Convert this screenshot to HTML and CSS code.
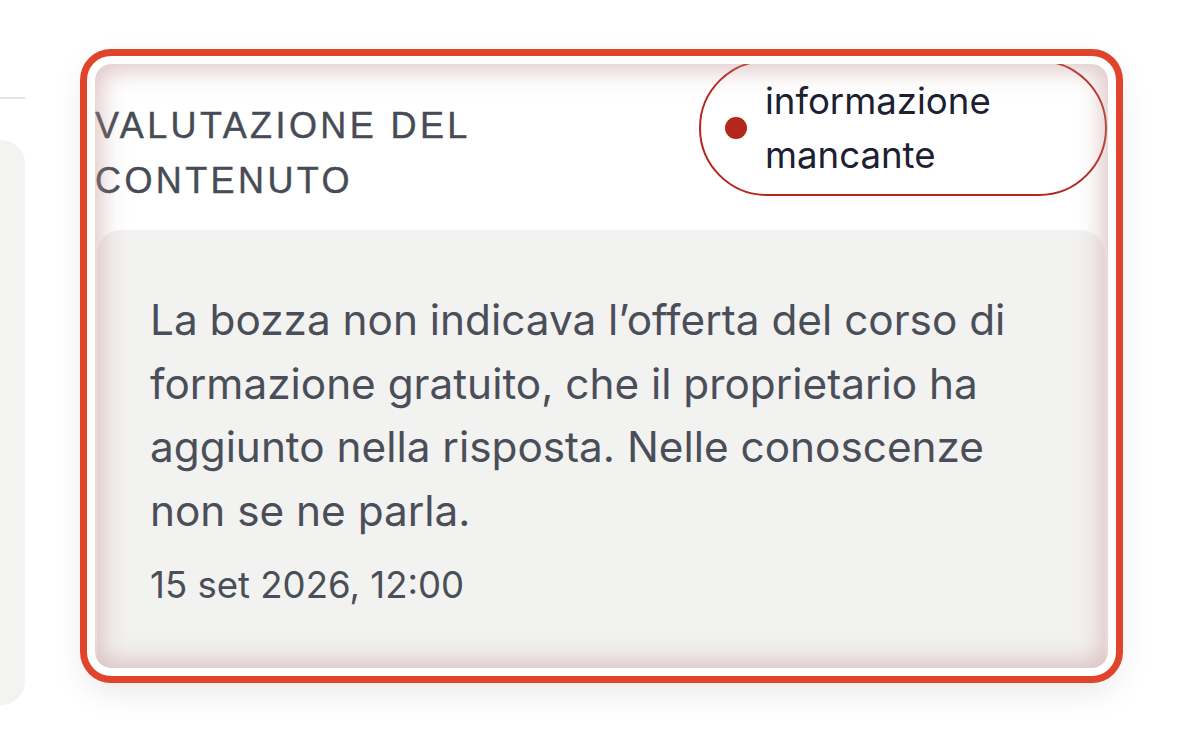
FILE: index.html
```html
<!DOCTYPE html>
<html lang="it">
<head>
<meta charset="utf-8">
<title>Valutazione del contenuto</title>
<link rel="stylesheet" href="styles.css">
</head>
<body>
<div class="page">
  <aside class="side">
    <div class="side-line"></div>
    <div class="side-panel"></div>
  </aside>
  <main class="main">
    <section class="card">
      <header class="card-head">
        <h2 class="title">Valutazione del contenuto</h2>
        <span class="badge"><span class="dot"></span><span class="badge-text">informazione mancante</span></span>
      </header>
      <div class="body-box">
        <p class="note">La bozza non indicava l’offerta del corso di formazione gratuito, che il proprietario ha aggiunto nella risposta. Nelle conoscenze non se ne parla.</p>
        <div class="date">15 set 2026, 12:00</div>
      </div>
    </section>
  </main>
</div>
</body>
</html>
```
FILE: styles.css
```css
* { box-sizing: border-box; }
html, body { margin: 0; padding: 0; background: #ffffff; }
body { font-family: Inter, "Noto Sans", sans-serif; width: 1200px; height: 729px; overflow: hidden; }
.page { display: flex; align-items: flex-start; }
.side { width: 25px; flex: none; display: flex; flex-direction: column; }
.side-line { margin-top: 97px; height: 2px; background: #e4e4e2; }
.side-panel { margin-top: 41px; height: 565px; background: #f3f3f1; border-radius: 0 24px 24px 0; }
.main { margin-left: 70px; margin-top: 64px; }
.card {
  position: relative;
  width: 1013px;
  height: 604px;
  background: #ffffff;
  border-radius: 16px;
  overflow: hidden;
  box-shadow: 0 0 0 8px #ffffff, 0 0 0 15px #e0442a, 0 12px 34px 10px rgba(0,0,0,0.10);
}
.card::after {
  content: "";
  position: absolute;
  inset: 0;
  border-radius: 16px;
  box-shadow: inset 0 0 24px 6px rgba(196,150,150,0.55);
  pointer-events: none;
}
.card-head { display: flex; justify-content: space-between; align-items: flex-start; margin-top: -4px; }
.title {
  margin: 38px 0 0 0;
  max-width: 440px;
  font-family: "Liberation Sans", Arial, sans-serif;
  font-size: 36px;
  line-height: 55px;
  font-weight: 400;
  letter-spacing: 3.4px;
  text-transform: uppercase;
  color: #474b55;
  -webkit-text-stroke: 0.4px #474b55;
}
.badge {
  width: 408px;
  margin-right: 1px;
  display: flex;
  align-items: center;
  gap: 18px;
  padding: 12px 20px 12px 24px;
  border: 2px solid #b5261c;
  border-radius: 70px;
  background: #ffffff;
}
.dot { width: 22px; height: 22px; border-radius: 50%; background: #b5261c; flex: none; }
.badge-text { font-size: 36.6px; line-height: 54px; color: #1c2030; }
.body-box {
  margin: 22px 3px 0 2px;
  height: 460px;
  background: #f2f2f0;
  border-radius: 24px;
  padding: 58px 70px 0 53px;
}
.note { margin: 0; font-size: 42.3px; line-height: 63.7px; color: #4a4e58; }
.date { margin-top: 20px; font-size: 36.6px; line-height: 44px; color: #4a4e58; }
```
